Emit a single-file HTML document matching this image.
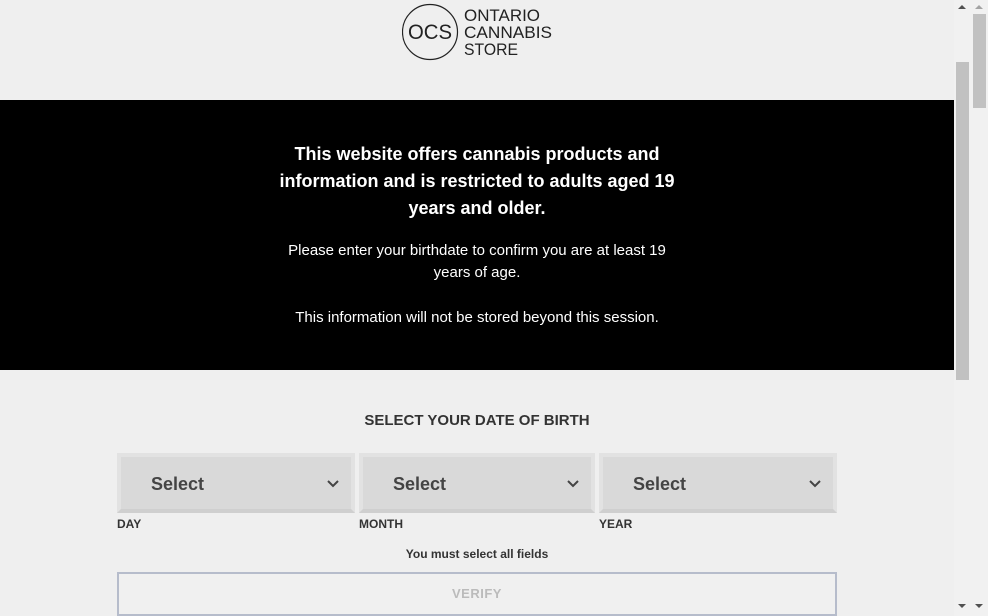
<!DOCTYPE html>
<html><head><style>
body{margin:0;width:988px;height:616px;overflow:hidden;background:#efefef;font-family:"Liberation Sans",sans-serif;position:relative}
.logo{position:absolute;left:402px;top:3px}
.bk{position:absolute;left:0;top:100px;width:954px;height:270px;background:#000;color:#fff;text-align:center}
.h{position:absolute;left:270px;width:414px;top:41px;font-weight:bold;font-size:18px;line-height:27px}
.p{position:absolute;left:270px;width:414px;font-size:15px;line-height:22px}
.t{position:absolute;left:0;width:954px;top:412px;text-align:center;font-weight:bold;font-size:15px;color:#333}
.s{position:absolute;top:453px;height:60px;background:#d9d9d9;box-sizing:border-box;border:4px solid #e2e2e2;border-bottom-color:#cfcfcf;font-weight:bold;font-size:18px;color:#444}
.s span{position:absolute;left:30px;top:17px}
.s svg{position:absolute;right:12px;top:23px}
.l{position:absolute;top:517px;font-size:12px;font-weight:bold;color:#333}
.m{position:absolute;left:0;width:954px;top:547px;text-align:center;font-size:12px;font-weight:bold;color:#333}
.v{position:absolute;left:117px;top:572px;width:720px;height:44px;box-sizing:border-box;border:2px solid #b6bccb;background:#f0f0f0;text-align:center;line-height:40px;color:#bbb;font-size:13px;font-weight:bold;letter-spacing:.5px}
.sb{position:absolute;top:0;height:616px;background:#f1f1f1}
</style></head><body>
<svg class="logo" width="160" height="58" viewBox="0 0 160 58">
<circle cx="28" cy="29" r="27.5" fill="none" stroke="#222" stroke-width="1.2"/>
<text x="28" y="36" text-anchor="middle" font-family="Liberation Sans" font-size="21" fill="#222" textLength="44" lengthAdjust="spacingAndGlyphs">OCS</text>
<text x="62" y="18" font-family="Liberation Sans" font-size="17" fill="#222" textLength="76" lengthAdjust="spacingAndGlyphs">ONTARIO</text>
<text x="62" y="35" font-family="Liberation Sans" font-size="17" fill="#222" textLength="88" lengthAdjust="spacingAndGlyphs">CANNABIS</text>
<text x="62" y="52" font-family="Liberation Sans" font-size="17" fill="#222" textLength="54" lengthAdjust="spacingAndGlyphs">STORE</text>
</svg>
<div class="bk">
<div class="h">This website offers cannabis products and information and is restricted to adults aged 19 years and older.</div>
<div class="p" style="top:140px">Please enter your birthdate to confirm you are at least 19 years of age.</div>
<div class="p" style="top:207px">This information will not be stored beyond this session.</div>
</div>
<div class="t">SELECT YOUR DATE OF BIRTH</div>
<div class="s" style="left:117px;width:238px"><span>Select</span><svg width="12" height="8"><path d="M1 1l5 5 5-5" fill="none" stroke="#444" stroke-width="2"/></svg></div>
<div class="s" style="left:359px;width:236px"><span>Select</span><svg width="12" height="8"><path d="M1 1l5 5 5-5" fill="none" stroke="#444" stroke-width="2"/></svg></div>
<div class="s" style="left:599px;width:238px"><span>Select</span><svg width="12" height="8"><path d="M1 1l5 5 5-5" fill="none" stroke="#444" stroke-width="2"/></svg></div>
<div class="l" style="left:117px">DAY</div>
<div class="l" style="left:359px">MONTH</div>
<div class="l" style="left:599px">YEAR</div>
<div class="m">You must select all fields</div>
<div class="v">VERIFY</div>
<div class="sb" style="left:954px;width:17px"><div style="position:absolute;left:2px;top:62px;width:13px;height:318px;background:#c1c1c1"></div></div>
<div class="sb" style="left:971px;width:17px"><div style="position:absolute;left:2px;top:14px;width:13px;height:94px;background:#c1c1c1"></div></div>
<svg style="position:absolute;left:954px;top:0" width="34" height="616">
<path d="M4 9l4-4 4 4z" fill="#505050"/><path d="M21 9l4-4 4 4z" fill="#a3a3a3"/>
<path d="M4 604l4 4 4-4z" fill="#505050"/><path d="M21 604l4 4 4-4z" fill="#505050"/>
</svg>
</body></html>
